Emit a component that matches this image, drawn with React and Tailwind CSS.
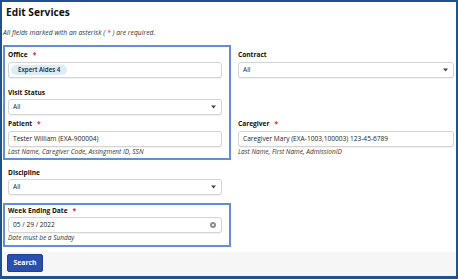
import React from "react";

const Req = () => <span className="ml-[5px] text-[#d8262c]">*</span>;

const Label = ({ children, required, className = "" }) => (
  <div className={`h-[10px] leading-[10px] text-[6.6px] font-bold text-[#111] ${className}`}>
    {children}
    {required && <Req />}
  </div>
);

const Box = ({ children, className = "" }) => (
  <div
    className={`h-[16px] rounded-[3px] border border-[#d4d4d4] bg-white shadow-[0_1px_1px_rgba(0,0,0,0.06)] flex items-center px-[4px] text-[6.6px] text-[#222] ${className}`}
  >
    {children}
  </div>
);

const SelectBox = ({ value }) => (
  <Box>
    <span className="flex-1">{value}</span>
    <svg width="5" height="4" viewBox="0 0 5 4" className="mr-[1px]">
      <path d="M0 0.5h5L2.5 3.5z" fill="#444" />
    </svg>
  </Box>
);

const Helper = ({ children }) => (
  <div className="mt-[1px] h-[8px] leading-[8px] text-[6.5px] italic text-[#333]">{children}</div>
);

export default function App() {
  return (
    <div
      className="w-[458px] h-[279px] bg-white border-2 border-b-[3px] border-[#21508f] flex flex-col overflow-hidden"
      style={{ fontFamily: '"Open Sans", "Liberation Sans", sans-serif' }}
    >
      <div className="pl-[4px] h-[22px] flex items-center shrink-0">
        <h1 className="text-[10.2px] font-bold text-[#111]">Edit Services</h1>
      </div>
      <div className="mt-[4px] pl-[1px] h-[10px] leading-[10px] text-[6.8px] italic text-[#333] shrink-0">
        All fields marked with an asterisk ( <span className="text-[#d8262c]">*</span> ) are required.
      </div>

      <div className="mt-[7px] flex gap-[7px] pl-[1px] pr-[2px] shrink-0">
        {/* left column */}
        <div className="w-[228px] flex flex-col">
          <div className="border-2 border-[#5f8fd6] pl-[3px] pr-[7px] pt-[3px] pb-[2px]">
            <Label required className="mb-[2px]">Office</Label>
            <Box className="pl-[2px]">
              <span className="h-[10px] px-[7px] rounded-full bg-[#dcedfa] text-[6.2px] font-semibold leading-[10px] text-[#222]">
                Expert Aides 4
              </span>
            </Box>
            <Label className="mt-[10px] mb-[1px]">Visit Status</Label>
            <SelectBox value="All" />
            <Label required className="mt-[4px] mb-[2px]">Patient</Label>
            <Box>Tester William (EXA-900004)</Box>
            <Helper>Last Name, Caregiver Code, Assingment ID, SSN</Helper>
          </div>

          <div className="pl-[5px] pr-[9px]">
            <Label className="mt-[8px] mb-[1px]">Discipline</Label>
            <SelectBox value="All" />
          </div>

          <div className="mt-[8px] border-2 border-[#5f8fd6] pl-[3px] pr-[7px] pt-[1px] pb-[3px]">
            <Label required className="mb-[1px]">Week Ending Date</Label>
            <Box>
              <span className="flex-1">05 / 29 / 2022</span>
              <svg width="6" height="6" viewBox="0 0 6 6" className="mr-[1px]">
                <circle cx="3" cy="3" r="3" fill="#8a8a8a" />
                <path d="M1.9 1.9l2.2 2.2M4.1 1.9L1.9 4.1" stroke="#fff" strokeWidth="0.8" />
              </svg>
            </Box>
            <Helper>Date must be a Sunday</Helper>
          </div>
        </div>

        {/* right column */}
        <div className="flex-1 flex flex-col pt-[5px]">
          <Label className="mb-[2px]">Contract</Label>
          <SelectBox value="All" />
          <Label required className="mt-[41px] mb-[2px]">Caregiver</Label>
          <Box>Caregiver Mary (EXA-1003,100003) 123-45-6789</Box>
          <Helper>Last Name, First Name, AdmissionID</Helper>
        </div>
      </div>

      <div className="mt-auto h-[24px] shrink-0 bg-[#f6f6f6] pl-[5px] pt-[2px] flex items-start">
        <button className="h-[18px] w-[36px] rounded-[2px] bg-[#2a4fae] border border-[#1f3f8f] text-white text-[6.8px] font-bold leading-none">
          Search
        </button>
      </div>
    </div>
  );
}
